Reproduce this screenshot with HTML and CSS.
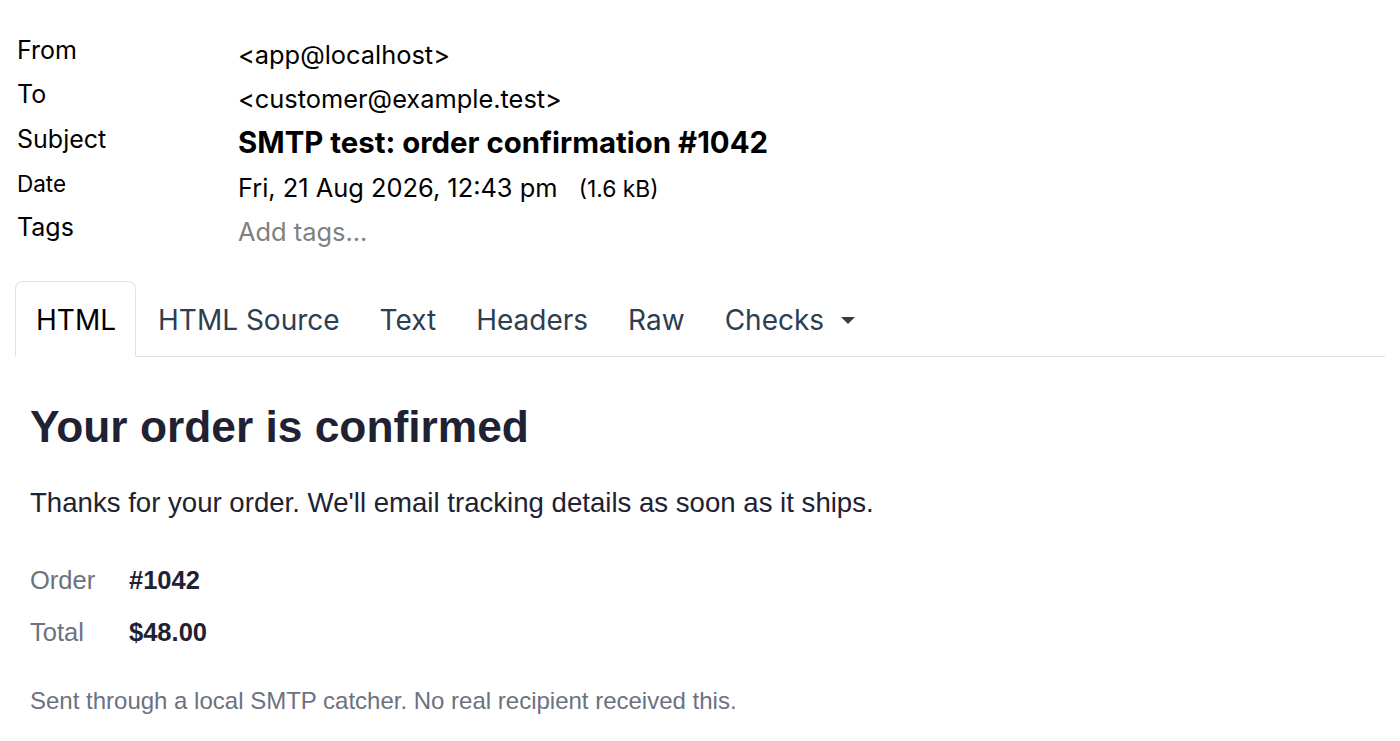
FILE: index.html
```html
<!DOCTYPE html>
<html lang="en">
<head>
    <meta charset="UTF-8">
    <meta name="viewport" content="width=device-width, initial-scale=1.0">
    <title>SMTP test: order confirmation #1042</title>
    <link rel="stylesheet" href="styles.css">
</head>
<body>
    <div id="mensagem">
        <div class="cabecalho">
            <div class="rotulo">From</div>
            <div class="valor">&lt;app@localhost&gt;</div>

            <div class="rotulo">To</div>
            <div class="valor">&lt;customer@example.test&gt;</div>

            <div class="rotulo">Subject</div>
            <div class="valor assunto">SMTP test: order confirmation #1042</div>

            <div class="rotulo pequeno">Date</div>
            <div class="valor">Fri, 21 Aug 2026, 12:43 pm <span class="tamanho">(1.6 kB)</span></div>

            <div class="rotulo">Tags</div>
            <div class="valor tags">Add tags...</div>
        </div>

        <ul class="abas">
            <li class="aba ativa">HTML</li>
            <li class="aba">HTML Source</li>
            <li class="aba">Text</li>
            <li class="aba">Headers</li>
            <li class="aba">Raw</li>
            <li class="aba">Checks <span class="seta"></span></li>
        </ul>

        <div class="corpo">
            <h1>Your order is confirmed</h1>
            <p>Thanks for your order. We'll email tracking details as soon as it ships.</p>
            <table class="pedido">
                <tr>
                    <td class="campo">Order</td>
                    <td class="dado">#1042</td>
                </tr>
                <tr>
                    <td class="campo">Total</td>
                    <td class="dado">$48.00</td>
                </tr>
            </table>
            <p class="rodape">Sent through a local SMTP catcher. No real recipient received this.</p>
        </div>
    </div>
</body>
</html>
```

FILE: styles.css
```css
body {
    font-family: 'Inter', 'Noto Sans', sans-serif;
    background-color: #fff;
    color: #000;
    margin: 0;
    padding: 0;
}

#mensagem {
    padding: 32px 15px 0 15px;
}

.cabecalho {
    display: grid;
    grid-template-columns: 221px 1fr;
    grid-auto-rows: 44.3px;
    align-items: center;
    padding-left: 2px;
}

.rotulo {
    font-size: 25px;
    margin-top: -8px;
}

.rotulo.pequeno {
    font-size: 22.5px;
}

.valor {
    font-size: 25.4px;
}

.assunto {
    font-size: 29.4px;
    font-weight: 700;
}

.tamanho {
    font-size: 22.8px;
    margin-left: 14px;
}

.tags {
    color: #808080;
}

.abas {
    display: flex;
    list-style: none;
    margin: 28px 0 0 0;
    padding: 0;
    border-bottom: 1px solid #dee2e6;
}

.aba {
    font-size: 28px;
    color: #2c3e50;
    padding: 21px 19px 19px 19px;
    margin-bottom: -1px;
    border: 1px solid transparent;
    border-radius: 8px 8px 0 0;
}

.aba.ativa {
    color: #000;
    padding-left: 20px;
    margin-right: 2px;
    border-color: #dee2e6 #dee2e6 #fff;
    background: #fff;
}

.seta {
    display: inline-block;
    margin-left: 9px;
    vertical-align: middle;
    border-top: 7px solid #2c3e50;
    border-left: 7px solid transparent;
    border-right: 7px solid transparent;
    position: relative;
    top: -2px;
}

.corpo {
    font-family: 'Liberation Sans', Arial, sans-serif;
    color: #1e2233;
    padding: 0 15px;
}

.corpo h1 {
    font-size: 44.3px;
    font-weight: 700;
    margin: 45px 0 0 0;
}

.corpo p {
    font-size: 27.6px;
    margin: 35px 0 0 0;
}

.pedido {
    border-collapse: collapse;
    margin-top: 35px;
    font-size: 25.5px;
}

.pedido td {
    padding: 0;
    height: 52px;
}

.campo {
    color: #6b7280;
    width: 99px;
}

.dado {
    font-weight: 700;
}

.corpo p.rodape {
    font-size: 24px;
    color: #6b7280;
    margin-top: 29px;
}
```
